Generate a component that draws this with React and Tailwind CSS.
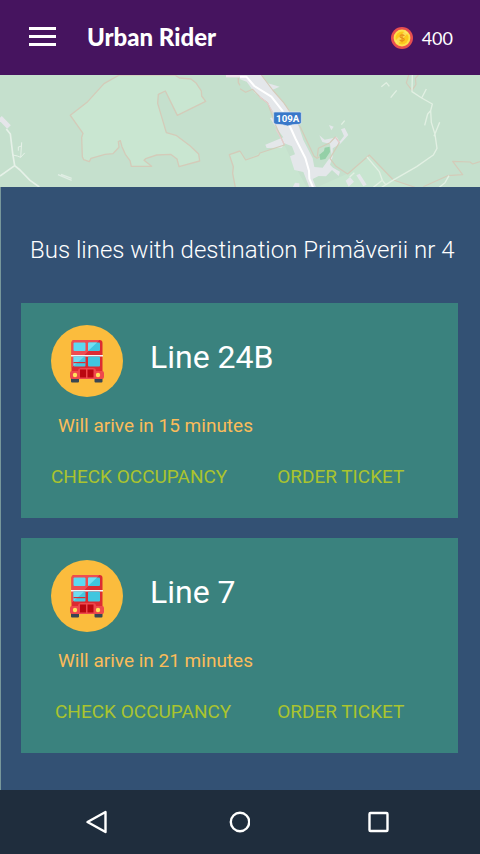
import React from 'react';

const lines = [
  { name: 'Line 24B', minutes: 15, inset: 'pl-0' },
  { name: 'Line 7', minutes: 21, inset: 'pl-1' },
];

function CoinIcon() {
  return (
    <svg viewBox="0 0 22 22" className="size-[22px]" aria-hidden="true">
      <circle cx="11" cy="11" r="11" fill="#e84f4f" />
      <circle cx="11" cy="11" r="8.4" fill="#fde14a" />
      <circle cx="11" cy="11" r="6.5" fill="#fcc81d" />
      <path d="M4 14 14 4l3 2L7 17z" fill="#fff09a" opacity=".45" />
      <path d="M13.2 9c-.5-1.4-4.2-1.5-4.2.4 0 2 4.2 1.1 4.2 3.1 0 1.900-3.800 1.800-4.400.3M11 6.800v8.400" fill="none" stroke="#e8921a" strokeWidth="1.300" />
    </svg>
  );
}

function MapStrip() {
  return (
    <svg
      viewBox="0 0 480 112"
      preserveAspectRatio="xMidYMid slice"
      className="block h-28 w-full bg-[#c5e0cd]"
      role="img"
      aria-label="Map around road 109A"
    >
      <rect width="480" height="112" fill="#c5e0cd" />
      <g transform="translate(0 -5) scale(.33333)" fill="none" strokeLinejoin="round">
        <path
          d="M358 15 312 41 263 95 211 136 249 190 245 202 247 260 251 269 268 275 273 265 315 253 339 251 357 232 355 215 361 212 366 230 376 253 390 272 394 289H455L432 271 437 266 470 255 512 253 531 267 537 290 599 273 596 252 570 227 528 196 499 188 473 100 475 73 496 63 532 136 617 94 605 78 604 63 589 40 573 27 538 24 525 15Z"
          fill="#c9e6d1"
          stroke="#d4cbb9"
          strokeWidth="4"
        />
        <path d="M720 243 688 254 700 290 698 310 706 352H722Z" fill="#c8e5d0" />
        <path d="M720 243 688 254 700 290 698 310 706 352" stroke="#d4cbb9" strokeWidth="4" />
        <path d="M0 143 27 171" stroke="#e5e6ea" strokeWidth="15" />
        <path d="M19 177 31 192 38 250 44 287 0 318M44 287 60 300 90 331 118 351" stroke="#e6f1e8" strokeWidth="5" />
        <path d="M38 255 52 258 62 262 74 249M62 262 65 217M65 228 55 231 55 242" stroke="#e6f1e8" strokeWidth="3" />
        <path d="M174 314 215 331M183 313 215 325" stroke="#e0eee4" strokeWidth="4" />
        <path d="M678 18H720" stroke="#eee4ea" strokeWidth="8" />
        <path d="M715 24V38L720 46" stroke="#d4cbb9" strokeWidth="4" />
      </g>
      <g transform="translate(240 -5) scale(.33333)" fill="none" strokeLinejoin="round">
        <path d="M133 225 60 249 17 270 0 243V352H200L150 260Z" fill="#c8e5d0" />
        <path d="M230 352 322 311 388 256 460 330 525 352Z" fill="#c8e5d0" />
        <path
          d="M0 15H65L84 40 119 50 98 59 125 90 170 150 190 210 218 265 223 291 248 293 275 256 270 222 247 216 238 196 254 209 280 204 290 200 299 215 312 198 303 178 314 174 325 195 301 221 278 235 278 260 270 284 279 293 300 305 296 318 276 300 258 319 236 318 218 327 228 352H208L190 306 163 300 150 259 165 253 156 229 133 220 126 233 80 234 76 224 130 202 103 165 90 144 110 140 99 125 82 96 44 68 20 35 0 28Z"
          fill="#e4e7ea"
        />
        <path d="M267 165 281 170 274 181Z" fill="#e4e7ea" />
        <path d="M317 332 330 321 342 335 326 350ZM349 316 359 311 380 344 370 349Z" fill="#e4e7ea" />
        <path d="M158 352 165 338 178 340V352Z" fill="#e4e7ea" />
        <path d="M238 254 252 243 254 233 269 230 270 246 256 267 241 270Z" fill="#94d0a7" />
        <path
          d="M64 15 98 60 131 98 181 171 222 258 231 265 239 260M232 260 235 235 270 218 286 201 298 218 270 265 288 289 323 312 388 255 460 330 525 352M0 56 17 67 38 58 62 83 83 99 108 168 133 225 60 249 56 256 17 270 0 243M550 350 623 317 668 314 638 274 690 276 698 282 720 275M506 15 499 39 516 61 528 43 526 25 535 15"
          stroke="#d4cbb9"
          strokeWidth="3.500"
        />
        <path d="M58 80 83 99 100 130M108 178 133 223M286 202 298 218" stroke="#ebcbd0" strokeWidth="3" />
        <path d="M0 20H19L43 48 94 80 127 122 148 165 167 207 196 264 207 302 208 326 219 352" stroke="#fff" strokeWidth="6" />
        <path
          d="M517 15 516 65 545 84 577 102 572 122 574 157 585 193 591 235 580 255 530 290 457 332 425 352M545 84 559 57M571 123 563 132 554 166M599 157 582 199M381 261 418 305 427 331 438 345M400 352 427 331M627 317 615 338 598 352M424 50 439 38 448 49M470 61 452 83M314 152 304 164M329 321 343 308"
          stroke="#e2f0e3"
          strokeWidth="4"
        />
        <path d="M104 126H180Q184 126 184 130V157Q184 162 177 163Q160 162 143 168Q124 162 108 163Q101 161 101 157V130Q101 126 104 126Z" fill="#3978c9" stroke="#e2eaf2" strokeWidth="2" />
        <text x="143" y="156" textAnchor="middle" fill="#fff" fontFamily="Roboto, sans-serif" fontSize="29" fontWeight="700">109A</text>
      </g>
    </svg>
  );
}

function BusIcon() {
  return (
    <svg viewBox="0 0 72 72" className="size-[72px] shrink-0" aria-hidden="true">
      <circle cx="36" cy="36" r="36" fill="#fbbc3d" />
      <path d="M20 53h8v3.500q0 1-1 1h-6q-1 0-1-1zM43.500 53h8v3.500q0 1-1 1h-6q-1 0-1-1z" fill="#394653" />
      <rect x="20.500" y="15" width="31" height="39" rx="3" fill="#dc2b32" />
      <path d="M20.500 43V18q0-3 3-3h25L20.500 43z" fill="#ef4d51" />
      <rect x="22.500" y="17.500" width="12" height="8.500" rx="1" fill="#5cd9f0" />
      <rect x="37" y="17.500" width="12" height="8.500" rx="1" fill="#40c6df" />
      <path d="M37 26v-7.500q0-1 1-1h8z" fill="#72e0f2" />
      <rect x="20" y="30" width="32" height="1.500" fill="#f4f5f5" />
      <rect x="22.500" y="31.500" width="12" height="10" rx="1" fill="#45c8e0" />
      <path d="M22.500 41V31.500h11z" fill="#70dcef" />
      <rect x="37" y="31.500" width="12" height="10" rx="1" fill="#40c6df" />
      <path d="M22.500 37h12v1.200h-12z" fill="#dc2b32" />
      <rect x="19" y="46" width="34" height="8" rx="2" fill="#ef484c" />
      <path d="M27 46q0-3 3-3h12q3 0 3 3v8H27z" fill="#ef484c" />
      <path d="M29 44.500h6v8h-6zM36.500 44.500h6v8h-6z" fill="#ba0710" />
      <circle cx="24" cy="50" r="2.200" fill="#ffe45a" />
      <circle cx="47" cy="50" r="2.200" fill="#ffe45a" />
    </svg>
  );
}

function LineCard({ name, minutes, inset }) {
  return (
    <article className="bg-[#3a827e] px-[30px] pt-[22px] pb-[29px]">
      <div className="flex items-center gap-[27px]">
        <BusIcon />
        <h2 className="pb-2 text-[32px] leading-10 text-white">{name}</h2>
      </div>
      <p className="mt-[17px] pl-[7px] text-[19px] leading-6 text-[#fbbc5a]">Will arive in {minutes} minutes</p>
      <div className="mt-[27px] grid grid-cols-[3fr_2fr] text-[19px] leading-6 text-[#aac42e]">
        <button type="button" className={`text-left whitespace-nowrap ${inset}`}>CHECK OCCUPANCY</button>
        <button type="button" className="text-left whitespace-nowrap">ORDER TICKET</button>
      </div>
    </article>
  );
}

export default function App() {
  return (
    <div className="flex min-h-screen flex-col bg-[#335174] font-['Roboto',sans-serif]">
      <header className="flex h-[75px] items-center justify-between bg-[#46145f] pr-[27px] pl-[29px] font-['Lato',sans-serif] text-white">
        <div className="flex items-center gap-[31px] pb-[2px]">
          <button type="button" aria-label="Open menu" className="flex w-[27px] flex-col gap-[5px]">
            <span className="h-[3px] bg-white" />
            <span className="h-[3px] bg-white" />
            <span className="h-[3px] bg-white" />
          </button>
          <h1 className="text-2xl font-black">Urban Rider</h1>
        </div>
        <div className="flex items-center gap-[9px]">
          <CoinIcon />
          <span className="text-lg">400</span>
        </div>
      </header>
      <MapStrip />
      <main className="flex-1 border-l border-[#78979b] pr-[22px] pb-[37px] pl-5">
        <p className="pt-[47px] pb-[37px] pl-[9px] text-2xl leading-8 font-light whitespace-nowrap text-white">
          Bus lines with destination Primăverii nr 4
        </p>
        <div className="flex flex-col gap-5">
          {lines.map((line) => (
            <LineCard key={line.name} {...line} />
          ))}
        </div>
      </main>
      <nav aria-label="System navigation" className="flex h-16 items-center justify-between bg-[#1f2d3d] pr-[89px] pl-[84px]">
        <button type="button" aria-label="Back">
          <svg viewBox="0 0 24 24" className="size-6" fill="none" stroke="#fff" strokeWidth="2.400" strokeLinejoin="round">
            <path d="M21.500 2v20L3.500 12z" />
          </svg>
        </button>
        <button type="button" aria-label="Home">
          <svg viewBox="0 0 24 24" className="size-6" fill="none" stroke="#fff" strokeWidth="2.400">
            <circle cx="14" cy="12" r="9.200" />
          </svg>
        </button>
        <button type="button" aria-label="Recent apps">
          <svg viewBox="0 0 24 24" className="size-6" fill="none" stroke="#fff" strokeWidth="2.400">
            <rect x="2.500" y="3" width="18" height="18" rx="1" />
          </svg>
        </button>
      </nav>
    </div>
  );
}
